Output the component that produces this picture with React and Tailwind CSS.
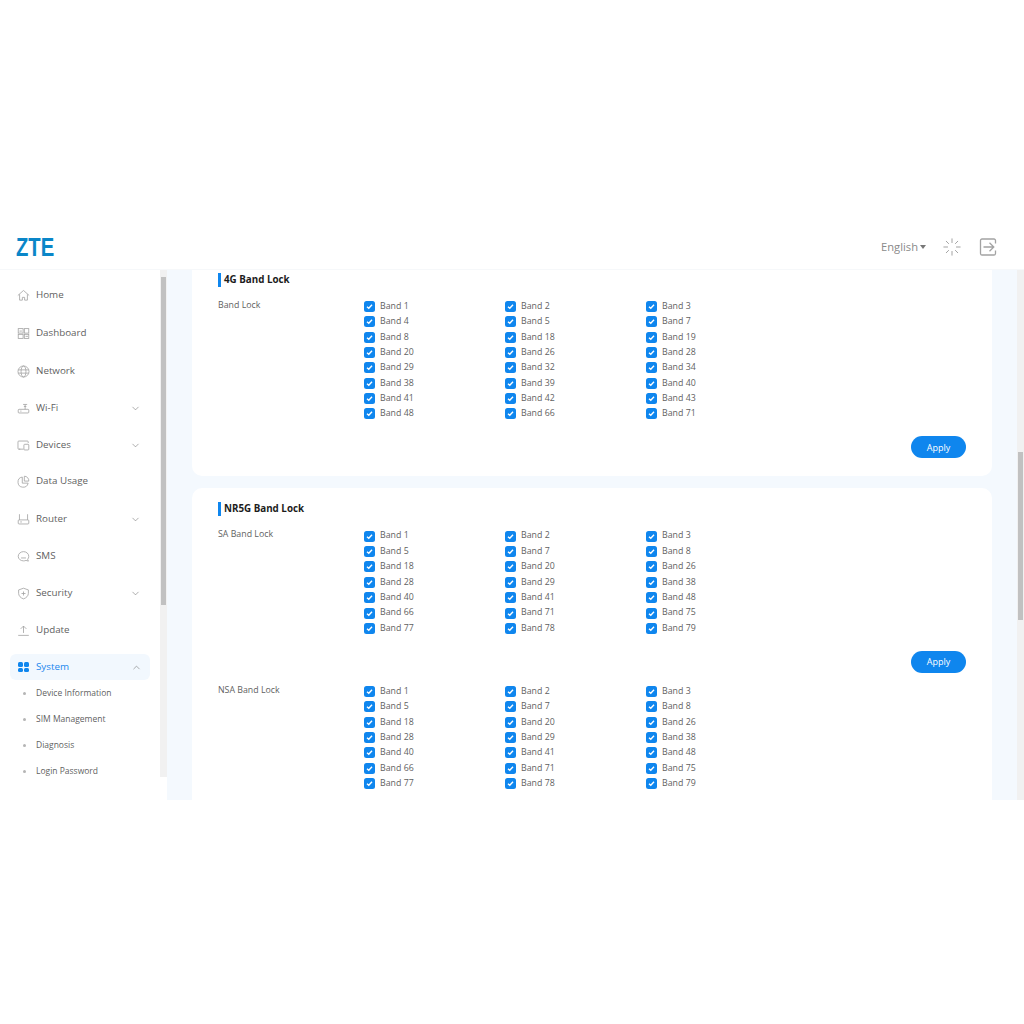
import { ChevronDown, ChevronUp } from 'lucide-react';

const icons = {
    home: <><path d="M1 8 8 1.800 15 8" /><path d="M3.200 6.500v7.200h3.400v-3.400h2.800v3.400h3.400V6.500" /></>,
    dashboard: <><rect x="1.500" y="2" width="6" height="5.500" /><rect x="9" y="2" width="5.500" height="5.500" /><rect x="1.500" y="9" width="6" height="5" /><rect x="9" y="9" width="5.500" height="5" /><path d="M3 5h3M10.500 11.500h3" /></>,
    network: <><circle cx="8" cy="8" r="6.800" /><ellipse cx="8" cy="8" rx="3" ry="6.800" /><path d="M1.500 6h13M1.500 10h13" /></>,
    wifi: <><rect x="1.500" y="9" width="13" height="4.500" rx="1" /><path d="M10 9V3M7.500 3h5M8.500 5.500h3M4 11.200h1.500" /></>,
    devices: <><path d="M4 12.500H2a1 1 0 0 1-.8-1V3.500a1 1 0 0 1 1-1h10.600a1 1 0 0 1 1 1v1.500" /><rect x="8.500" y="6.500" width="6" height="7" rx="1" /><path d="M2 12.500h6" /></>,
    usage: <><path d="M6.500 2.500a6.300 6.300 0 1 0 7.200 7.500H6.500Z" /><path d="M9 1.500a5.500 5.500 0 0 1 5.500 6H9Z" /></>,
    router: <><path d="M3 1.500v7M13 1.500v7" /><rect x="1.500" y="8.500" width="13" height="5" rx="1" /><path d="M4 11h2" /></>,
    sms: <><path d="M8 2c3.600 0 6.500 2.600 6.500 5.800 0 1.400-.5 2.600-1.400 3.600l.9 2.300-3-.9c-.9.400-1.900.6-3 .6-3.600 0-6.500-2.500-6.500-5.600S4.400 2 8 2Z" /><path d="M5 9.800h6" /></>,
    security: <><path d="M8 1.500 14 3.600v4.200c0 3.200-2.500 5.600-6 6.800-3.500-1.200-6-3.600-6-6.800V3.600Z" /><path d="M8 5.500v5M5.500 8h5" /></>,
    update: <><path d="M8 11V2.500M4.500 6 8 2.500 11.500 6M1.500 14h13" /></>,
};

const NavIcon = ({ name }) => (
    <svg viewBox="0 0 16 16" fill="none" stroke="currentColor" strokeWidth="1" className="w-[13px] h-[13px] text-[#a3a3a3] shrink-0">
        {icons[name]}
    </svg>
);

const navItems = [
    { label: 'Home', icon: 'home', h: 'h-[38px]' },
    { label: 'Dashboard', icon: 'dashboard', h: 'h-[38px]' },
    { label: 'Network', icon: 'network', h: 'h-[38px]' },
    { label: 'Wi-Fi', icon: 'wifi', h: 'h-[37px]', arrow: true },
    { label: 'Devices', icon: 'devices', h: 'h-[36px]', arrow: true },
    { label: 'Data Usage', icon: 'usage', h: 'h-[37px]' },
    { label: 'Router', icon: 'router', h: 'h-[38px]', arrow: true },
    { label: 'SMS', icon: 'sms', h: 'h-[36px]' },
    { label: 'Security', icon: 'security', h: 'h-[38px]', arrow: true },
    { label: 'Update', icon: 'update', h: 'h-[37px]' },
];

const subItems = ['Device Information', 'SIM Management', 'Diagnosis', 'Login Password'];

const lte = [1, 2, 3, 4, 5, 7, 8, 18, 19, 20, 26, 28, 29, 32, 34, 38, 39, 40, 41, 42, 43, 48, 66, 71];
const nr = [1, 2, 3, 5, 7, 8, 18, 20, 26, 28, 29, 38, 40, 41, 48, 66, 71, 75, 77, 78, 79];

const Sidebar = () => (
    <div className="w-[167px] h-[507px] flex shrink-0 bg-white">
        <div className="w-[160px] overflow-hidden pt-[6px]">
            {navItems.map((item) => (
                <div key={item.label} className={`${item.h} flex items-center pl-[17px] pr-[19px] text-[9.8px] text-[#5f5f5f]`}>
                    <NavIcon name={item.icon} />
                    <span className="ml-[6px] flex-1">{item.label}</span>
                    {item.arrow && <ChevronDown className="w-[11px] h-[11px] text-[#777]" strokeWidth={1.300} />}
                </div>
            ))}
            <div className="mt-[5px] mx-[10px] h-[26px] flex items-center pl-[8px] pr-[8px] rounded-[6px] bg-[#f2f8fe] text-[9.8px] text-[#1a87ee]">
                <div className="grid grid-cols-2 gap-[1px] w-[10.500px] h-[10.500px] shrink-0">
                    <span className="rounded-[1.500px] bg-[#0f86ee]" />
                    <span className="rounded-[1.500px] bg-[#0f86ee]" />
                    <span className="rounded-[1.500px] bg-[#0f86ee]" />
                    <span className="rounded-[1.500px] bg-[#0f86ee]" />
                </div>
                <span className="ml-[7.500px] flex-1">System</span>
                <ChevronUp className="w-[11px] h-[11px] text-[#777]" strokeWidth={1.300} />
            </div>
            {subItems.map((label) => (
                <div key={label} className="h-[26px] flex items-center pl-[23px] text-[8.500px] text-[#5f5f5f]">
                    <span className="w-[3px] h-[3px] rounded-full bg-[#b5b5b5]" />
                    <span className="ml-[10px]">{label}</span>
                </div>
            ))}
        </div>
        <div className="w-[7px] bg-[#f1f1f1] pt-[7px] pb-[172px] px-[1px]">
            <div className="h-full bg-[#c1c1c1]" />
        </div>
    </div>
);

const Check = () => (
    <span className="w-[11px] h-[11px] rounded-[2.500px] bg-[#0f86ee] flex items-center justify-center shrink-0">
        <svg viewBox="0 0 10 10" className="w-[9px] h-[9px]" fill="none" stroke="#fff" strokeWidth="1.500">
            <path d="M2.200 5.200 4.200 7 7.800 3" />
        </svg>
    </span>
);

const BandGrid = ({ label, bands, rowClass }) => (
    <div className="flex">
        <div className="w-[146px] text-[8.800px] leading-[13px] text-[#5f5f5f] shrink-0">{label}</div>
        <div className="grid grid-cols-[141px_141px_141px]">
            {bands.map((band) => (
                <div key={band} className={`${rowClass} flex items-center text-[8.800px] text-[#5f5f5f]`}>
                    <Check />
                    <span className="ml-[5px]">Band {band}</span>
                </div>
            ))}
        </div>
    </div>
);

const Title = ({ children }) => (
    <div className="flex items-center h-[14px]">
        <span className="w-[3px] h-[14px] bg-[#0f86ee]" />
        <span className="ml-[3px] text-[9.800px] font-bold text-[#1c1c1c]">{children}</span>
    </div>
);

const Apply = () => (
    <div className="flex justify-end">
        <button className="w-[55px] h-[22px] rounded-full bg-[#0f86ee] text-white text-[9px]">Apply</button>
    </div>
);

const App = () => (
    <div className="h-[1024px] bg-white pt-[225px] font-['Open_Sans','Noto_Sans',sans-serif]">
        <header className="h-[45px] flex items-center justify-between bg-white border-b border-[#f6f8fa] pl-[16px] pr-[27px]">
            <span className="text-[25px] font-bold leading-none text-[#0a86c8] origin-left scale-x-[0.81] font-['Liberation_Sans',sans-serif]">ZTE</span>
            <div className="flex items-center">
                <span className="text-[11.200px] text-[#8a8a8a]">English</span>
                <span className="ml-[2px] w-0 h-0 border-x-[3.500px] border-x-transparent border-t-[4px] border-t-[#777]" />
                <svg viewBox="0 0 20 20" className="ml-[17px] w-[18px] h-[18px]" stroke="#999" strokeWidth="1">
                    <path d="M10 0.500v5M10 14.500v5M0.500 10h5M14.500 10h5M3.300 3.300l3.200 3.200M13.500 13.500l3.200 3.200M3.300 16.700l3.200-3.200M13.500 6.500l3.200-3.200" />
                </svg>
                <svg viewBox="0 0 18 18" className="ml-[18px] w-[18px] h-[18px]" fill="none" stroke="#a3a3a3" strokeWidth="1.300">
                    <path d="M16.500 5.500V2.500a1.500 1.500 0 0 0-1.500-1.500H3A1.500 1.500 0 0 0 1.500 2.500v13A1.500 1.500 0 0 0 3 17h12a1.500 1.500 0 0 0 1.500-1.500v-3" />
                    <path d="M4.500 9h10M10.500 4.800 14.800 9l-4.300 4.200" />
                </svg>
            </div>
        </header>
        <div className="h-[530px] flex items-start bg-white">
            <Sidebar />
            <main className="flex-1 h-full overflow-hidden bg-[#f4f9fe] px-[25px]">
                <div className="bg-white rounded-b-[10px] h-[206px] px-[26px] pt-[3px]">
                    <Title>4G Band Lock</Title>
                    <div className="mt-[12px]">
                        <BandGrid label="Band Lock" bands={lte} rowClass="h-[15.300px]" />
                    </div>
                    <div className="mt-[15px]"><Apply /></div>
                </div>
                <div className="mt-[12px] bg-white rounded-t-[10px] h-[400px] px-[26px] pt-[14px]">
                    <Title>NR5G Band Lock</Title>
                    <div className="mt-[12.400px]">
                        <BandGrid label="SA Band Lock" bands={nr} rowClass="h-[15.400px]" />
                    </div>
                    <div className="mt-[14.600px]"><Apply /></div>
                    <div className="mt-[11px]">
                        <BandGrid label="NSA Band Lock" bands={nr} rowClass="h-[15.400px]" />
                    </div>
                </div>
            </main>
            <div className="w-[7px] h-full bg-[#f1f1f1] pt-[182px] px-[1px] shrink-0">
                <div className="h-[168px] bg-[#c1c1c1]" />
            </div>
        </div>
    </div>
);

export default App;
